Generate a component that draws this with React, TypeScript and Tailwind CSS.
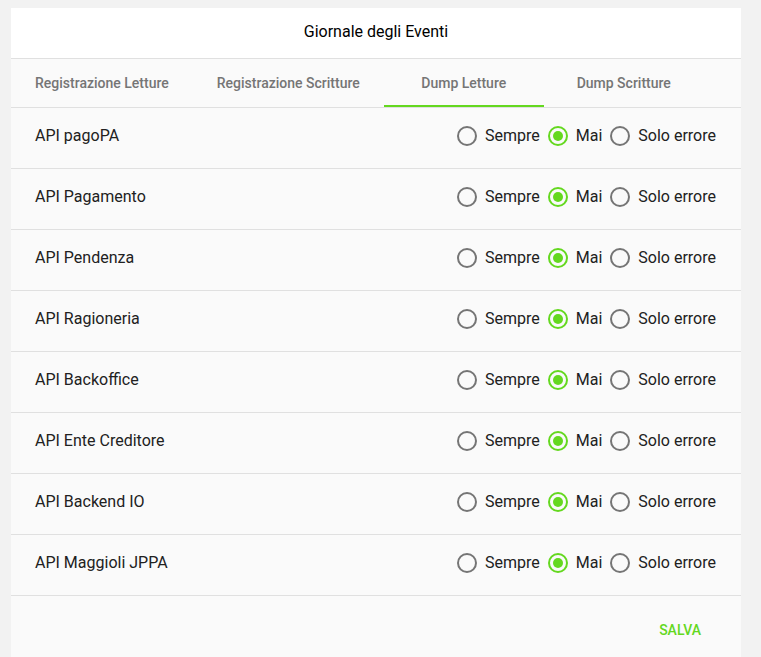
import { useState } from 'react';

const GREEN = '#64d81f';

const apis = [
  'API pagoPA',
  'API Pagamento',
  'API Pendenza',
  'API Ragioneria',
  'API Backoffice',
  'API Ente Creditore',
  'API Backend IO',
  'API Maggioli JPPA',
];

const tabs = ['Registrazione Letture', 'Registrazione Scritture', 'Dump Letture', 'Dump Scritture'];
const options = ['Sempre', 'Mai', 'Solo errore'];

function RadioIcon({ checked }: { checked: boolean }) {
  return (
    <svg width="20" height="20" viewBox="0 0 20 20" className="shrink-0">
      <circle cx="10" cy="10" r="9" fill="none" stroke={checked ? GREEN : '#757575'} strokeWidth="2" />
      {checked && <circle cx="10" cy="10" r="5" fill={GREEN} />}
    </svg>
  );
}

export default function App() {
  const [activeTab, setActiveTab] = useState(2);
  const [values, setValues] = useState<string[]>(apis.map(() => 'Mai'));

  // Change the selected option for one row
  const pick = (i: number, opt: string) => {
    setValues(prev => prev.map((v, j) => (j === i ? opt : v)));
  };

  return (
    <main
      className="min-h-screen bg-[#f2f2f2] pt-[8px] px-[11px] pr-[20px]"
      style={{ fontFamily: 'Roboto, "Liberation Sans", sans-serif' }}
    >
      <div className="w-[730px] bg-[#fafafa]">
        <div className="h-[51px] bg-white border-b border-[#e0e0e0] flex items-center justify-center pb-[2px]">
          <h1 className="text-[16px] text-black">Giornale degli Eventi</h1>
        </div>

        <div className="flex h-[49px] border-b border-[#e0e0e0]">
          {tabs.map((tab, i) => (
            <button
              key={tab}
              onClick={() => setActiveTab(i)}
              className="relative min-w-[160px] px-[24px] h-[48px] text-[14px] font-medium text-[#757575]"
            >
              {tab}
              {i === activeTab && (
                <span className="absolute left-0 right-0 bottom-0 h-[2px] bg-[#64d81f]" />
              )}
            </button>
          ))}
        </div>

        {apis.map((api, i) => (
          <div
            key={api}
            className="flex items-center justify-between h-[61px] border-b border-[#e0e0e0] pl-[24px] pr-[25px] pb-[5px]"
          >
            <span className="text-[16px] text-[#212121]">{api}</span>
            <div className="flex items-center">
              {options.map((opt, k) => (
                <label
                  key={opt}
                  onClick={() => pick(i, opt)}
                  className={`flex items-center cursor-pointer ${k === 0 ? '' : 'ml-[8px]'}`}
                >
                  <RadioIcon checked={values[i] === opt} />
                  <span className="ml-[8px] text-[16px] text-[#212121]">{opt}</span>
                </label>
              ))}
            </div>
          </div>
        ))}

        <div className="h-[61px] flex items-start justify-end pt-[16px] pr-[24px]">
          <button className="px-[16px] h-[36px] text-[14px] font-medium uppercase text-[#64d81f]">
            Salva
          </button>
        </div>
      </div>
    </main>
  );
}
